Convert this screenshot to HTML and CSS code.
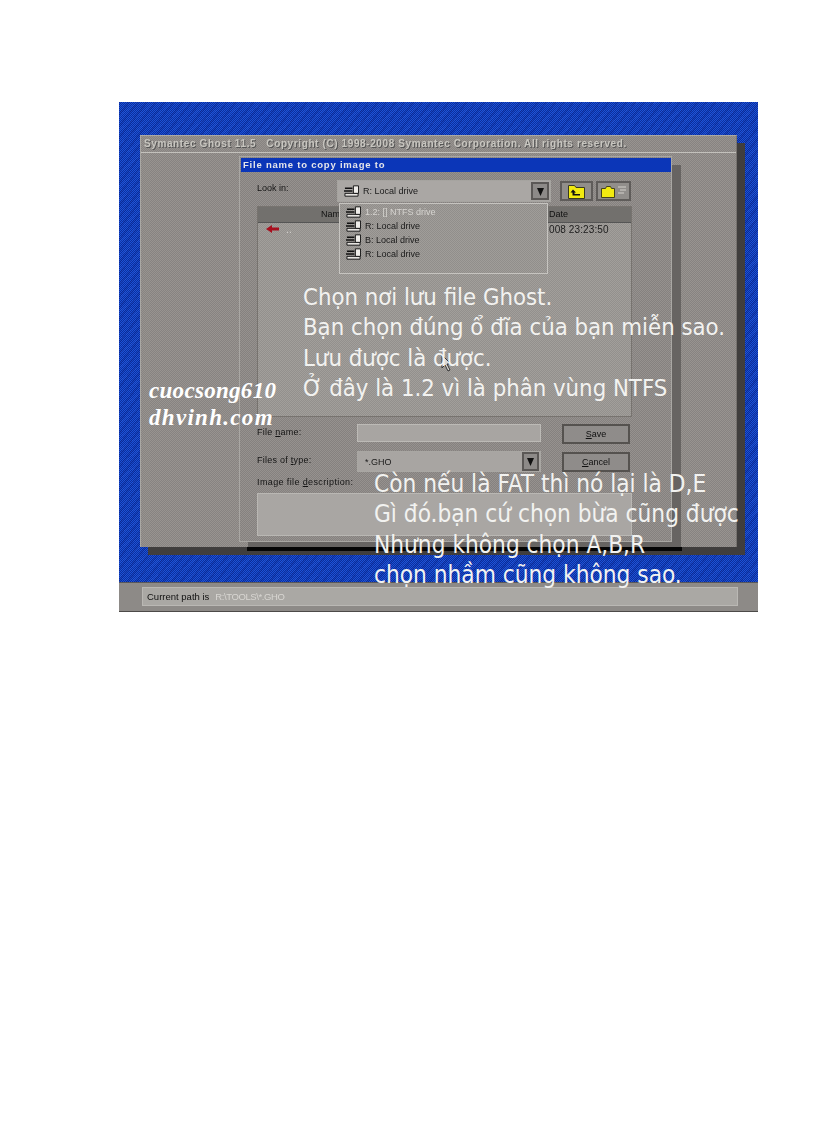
FILE: index.html
```html
<!DOCTYPE html>
<html lang="vi">
<head>
<meta charset="utf-8">
<title>Ghost</title>
<link rel="stylesheet" href="styles.css">
</head>
<body>
<svg class="defs" width="0" height="0" aria-hidden="true">
  <symbol id="drive" viewBox="0 0 16 12">
    <path d="M1 8.500h14v3H1z" fill="#e6e4e0" stroke="#111" stroke-width="1"/>
    <path d="M1 3h8M0 6h9" stroke="#111" stroke-width="1.500"/>
    <path d="M10 .5h5.500v8H10z" fill="#efede9" stroke="#111" stroke-width="1"/>
  </symbol>
</svg>
<div class="shot">
  <div class="desktop">
    <div class="main">
      <div class="main-title">Symantec Ghost 11.5&nbsp;&nbsp; Copyright (C) 1998-2008 Symantec Corporation. All rights reserved.</div>
      <div class="dialog">
        <div class="dialog-title">File name to copy image to</div>
        <div class="dialog-body">
          <div class="top-row">
            <span class="label look">Look in:</span>
            <div class="combo">
              <svg class="drive"><use href="#drive"/></svg>
              <span class="combo-text">R: Local drive</span>
              <span class="arrow-btn"><svg width="9" height="9" viewBox="0 0 9 9"><path d="M1 1h7L4.500 9z" fill="#111"/></svg></span>
              <div class="dropdown">
                <div class="drop-row sel"><svg class="drive"><use href="#drive"/></svg>1.2: [] NTFS drive</div>
                <div class="drop-row"><svg class="drive"><use href="#drive"/></svg>R: Local drive</div>
                <div class="drop-row"><svg class="drive"><use href="#drive"/></svg>B: Local drive</div>
                <div class="drop-row"><svg class="drive"><use href="#drive"/></svg>R: Local drive</div>
              </div>
            </div>
            <span class="tool tool-a">
              <svg width="17" height="15" viewBox="0 0 17 15"><path d="M.5 14.500V1.500h6l1.500 2h8.500v11z" fill="#f2ea10" stroke="#3a3a20"/><path d="M5 5.500 2.500 8.500H4.500V11.500H12V10H6.500V8.500H8z" fill="#111"/></svg>
            </span>
            <span class="tool tool-b">
              <svg width="26" height="13" viewBox="0 0 26 13"><path d="M.5 12.500V3.500h4l1-2h4l1 2h3v9z" fill="#f2ea10" stroke="#44421c"/><path d="M17 2h8M19 5h6M17 8h6" stroke="#bdbab6" stroke-width="1.500"/></svg>
            </span>
          </div>
          <div class="list">
            <div class="list-head"><span class="col-name">Nam</span><span class="col-date">Date</span></div>
            <div class="list-row">
              <span class="col-up">
                <svg width="14" height="8" viewBox="0 0 14 8"><path d="M0 4 6 0v2.500h7v3H6V8z" fill="#a80f1e"/></svg>
                <span class="dot">..</span>
              </span>
              <span class="col-date">008 23:23:50</span>
            </div>
          </div>
          <div class="form">
            <span class="label">File <u>n</u>ame:</span>
            <div class="field"></div>
            <div class="btn"><span><u>S</u>ave</span></div>
            <span class="label label-type">Files of <u>t</u>ype:</span>
            <div class="field field-type">
              <span class="type-text">*.GHO</span>
              <span class="arrow-btn"><svg width="9" height="9" viewBox="0 0 9 9"><path d="M1 1h7L4.500 9z" fill="#111"/></svg></span>
            </div>
            <div class="btn btn-cancel"><span><u>C</u>ancel</span></div>
          </div>
          <div class="label desc-label">Image file <u>d</u>escription:</div>
          <div class="desc-box"></div>
        </div>
      </div>
    </div>
    <div class="status">
      <div class="status-inner"><span class="status-label">Current path is</span><span class="status-path">R:\TOOLS\*.GHO</span></div>
    </div>
  </div>
  <svg class="cursor" width="12" height="18" viewBox="0 0 12 18"><path d="M1 1v13l3-3 3 6 2-1-3-6h4z" fill="#d8d6d2" stroke="#333"/></svg>
  <div class="watermark"><div class="wm-a">cuocsong610</div><div class="wm-b">dhvinh.com</div></div>
  <div class="caption caption-a">Chọn nơi lưu file Ghost.<br>Bạn chọn đúng ổ đĩa của bạn miễn sao.<br>Lưu được là được.<br>Ở đây là 1.2 vì là phân vùng NTFS</div>
  <div class="caption caption-b">Còn nếu là FAT thì nó lại là D,E<br>Gì đó.bạn cứ chọn bừa cũng được<br>Nhưng không chọn A,B,R<br>chọn nhầm cũng không sao.</div>
</div>
</body>
</html>
```

FILE: styles.css
```css
* { box-sizing: border-box; }
html, body { margin: 0; background: #fff; }
body { height: 1123px; overflow: hidden; padding: 102px 0 0 119px; font-family: "Liberation Sans", sans-serif; }
.defs { position: absolute; }

.shot { position: relative; width: 639px; height: 510px; overflow: hidden; }
.desktop {
  width: 100%; height: 100%;
  display: flex; flex-direction: column;
  padding-top: 33px;
  filter: blur(.45px);
  background-color: #0f3dbb;
  background-image:
    repeating-linear-gradient(128deg, rgba(5,20,110,.2) 0 2px, transparent 2px 7px),
    repeating-linear-gradient(142deg, rgba(60,110,240,.16) 0 1px, transparent 1px 11px),
    conic-gradient(#1d52d6 25%, #0b2f9f 0 50%, #1d52d6 0 75%, #0b2f9f 0);
  background-size: auto, auto, 2px 2px;
}

.main {
  position: relative;
  width: 597px; height: 412px; margin-left: 21px; flex: none;
  border-left: 1px solid #aaa8a4; border-top: 1px solid #aaa8a4;
  border-right: 1px solid #77736f;
  background-color: #8f8b89;
  background-image: conic-gradient(#989490 25%, #878381 0 50%, #989490 0 75%, #878381 0);
  background-size: 2px 2px;
  box-shadow: 8px 8px 0 #403e3d;
}
.main::after { content: ""; position: absolute; left: 106px; top: 100%; width: 435px; height: 4px; background: #050505; }
.main-title {
  height: 17px; padding-left: 3px;
  border-bottom: 1px solid #c3c1bc;
  font-size: 10px; line-height: 16px; font-weight: bold; letter-spacing: .61px;
  color: #c8c6c0; text-shadow: 1px 1px 0 #555;
  white-space: nowrap;
}

.dialog {
  position: absolute; left: 98px; top: 20px;
  width: 433px; height: 386px;
  padding: 1px 0 1px 1px;
  border: 1px solid #a9a7a3;
  background-color: #8d8987;
  background-image: conic-gradient(#96928f 25%, #85817f 0 50%, #96928f 0 75%, #85817f 0);
  background-size: 2px 2px;
  box-shadow: 9px 9px 0 #676462;
}
.dialog-title {
  height: 14px; padding-left: 2px;
  background: #0b36b8;
  color: #e6e6ea;
  font-size: 9.500px; line-height: 14px; font-weight: bold; letter-spacing: .78px;
}
.dialog-body { display: flex; flex-direction: column; padding: 8px 39px 0 16px; }

.label { font-size: 9px; line-height: 14px; color: #141414; white-space: nowrap; }
.top-row { display: flex; align-items: flex-start; height: 22px; }
.look { width: 80px; padding-top: 1px; }
.combo {
  position: relative;
  width: 214px; height: 22px; margin-right: 9px;
  display: flex; align-items: center;
  padding-left: 6px;
  border: 1px solid #a6a4a0;
  background: #aaa7a4;
}
.drive { width: 15px; height: 12px; flex: none; margin-right: 4px; }
.combo-text { font-size: 9px; color: #1a1a1a; }
.arrow-btn {
  position: absolute; right: 1px; top: 1px;
  width: 18px; height: 18px;
  display: flex; align-items: center; justify-content: center;
  border: 2px solid #5b5856;
  background: #8d8a88;
}
.tool {
  height: 20px; margin-top: 1px;
  display: flex; align-items: center; justify-content: center;
  border: 2px solid #5f5c5a;
  background: #918e8b;
}
.tool-a { width: 33px; margin-right: 3px; }
.tool-b { width: 35px; }

.dropdown {
  position: absolute; left: 1px; top: 22px; z-index: 2;
  width: 209px; height: 71px;
  padding-top: 1px;
  border: 1px solid #c6c4c0;
  background-color: #989592;
  background-image: conic-gradient(#a09d99 25%, #918e8b 0 50%, #a09d99 0 75%, #918e8b 0);
  background-size: 2px 2px;
}
.drop-row { display: flex; align-items: center; height: 14px; padding-left: 6px; font-size: 9px; color: #1a1a1a; }
.drop-row.sel { color: #d6d4d0; }

.list {
  height: 211px; margin-top: 4px;
  border: 1px solid #77736f;
  background-color: #9a9794;
  background-image: conic-gradient(#a29f9b 25%, #93908d 0 50%, #a29f9b 0 75%, #93908d 0);
  background-size: 2px 2px;
}
.list-head {
  display: grid; grid-template-columns: 291px 1fr;
  height: 16px;
  background: #72706d;
  border-bottom: 1px solid #555;
  font-size: 9px; line-height: 15px; color: #111;
}
.col-name { padding-left: 63px; }
.list-row { display: grid; grid-template-columns: 291px 1fr; height: 12px; align-items: center; font-size: 10px; letter-spacing: .1px; color: #1c1c1c; }
.col-up { display: flex; align-items: center; padding-left: 8px; }
.dot { margin-left: 6px; color: #d5d3cf; }

.form {
  display: grid;
  grid-template-columns: 100px 205px 68px;
  row-gap: 7px;
  margin-top: 7px;
  align-items: start;
}
.form .label { margin-top: 1px; letter-spacing: .25px; }
.form .label-type { margin-top: 2px; }
.field {
  position: relative;
  width: 184px; height: 18px;
  border: 1px solid #bcbab6;
  background: #a8a5a2;
}
.field-type { height: 21px; display: flex; align-items: center; padding-left: 7px; border-color: #a9a7a3; }
.type-text { font-size: 9px; color: #1a1a1a; }
.field-type .arrow-btn { right: 1px; top: 0; height: 19px; width: 17px; }
.btn {
  height: 20px; width: 68px;
  display: flex; align-items: center; justify-content: center;
  border: 2px solid #55524f;
  background: #8f8c8a;
  font-size: 9px; color: #111;
}
.btn-cancel { margin-top: 1px; }
.desc-label { margin-top: 3px; letter-spacing: .38px; }
.desc-box { height: 43px; margin-top: 4px; background: #a9a6a3; border: 1px solid #b9b7b3; }

.status {
  height: 30px; margin-top: 35px; flex: none;
  padding: 4px 20px 0 23px;
  background-color: #8d8a87;
  border-top: 1px solid #59575a;
  border-bottom: 1px solid #4c4a48;
}
.status-inner {
  display: flex; align-items: center; gap: 6px;
  height: 19px; padding-left: 4px;
  background: #aaa8a4;
  border: 1px solid #bab8b4;
  font-size: 9.500px;
}
.status-label { color: #111; }
.status-path { color: #d8d6d2; letter-spacing: -.4px; }

.cursor { position: absolute; left: 322px; top: 252px; }
.watermark {
  position: absolute; left: 30px; top: 275px;
  font-family: "Liberation Serif", serif; font-style: italic; font-weight: bold;
  font-size: 23px;
  color: #fff; white-space: nowrap;
}
.wm-a { line-height: 28px; letter-spacing: .3px; }
.wm-b { line-height: 20px; margin-top: 3px; letter-spacing: 1.300px; }
.caption {
  position: absolute;
  font-family: "DejaVu Sans Condensed", "DejaVu Sans", sans-serif;
  font-stretch: condensed;
  font-size: 23.700px; line-height: 30.300px;
  color: #f2f2f0; white-space: nowrap;
}
.caption-a { left: 184px; top: 180px; }
.caption-b { left: 255px; top: 367px; font-size: 24.200px; }
```
